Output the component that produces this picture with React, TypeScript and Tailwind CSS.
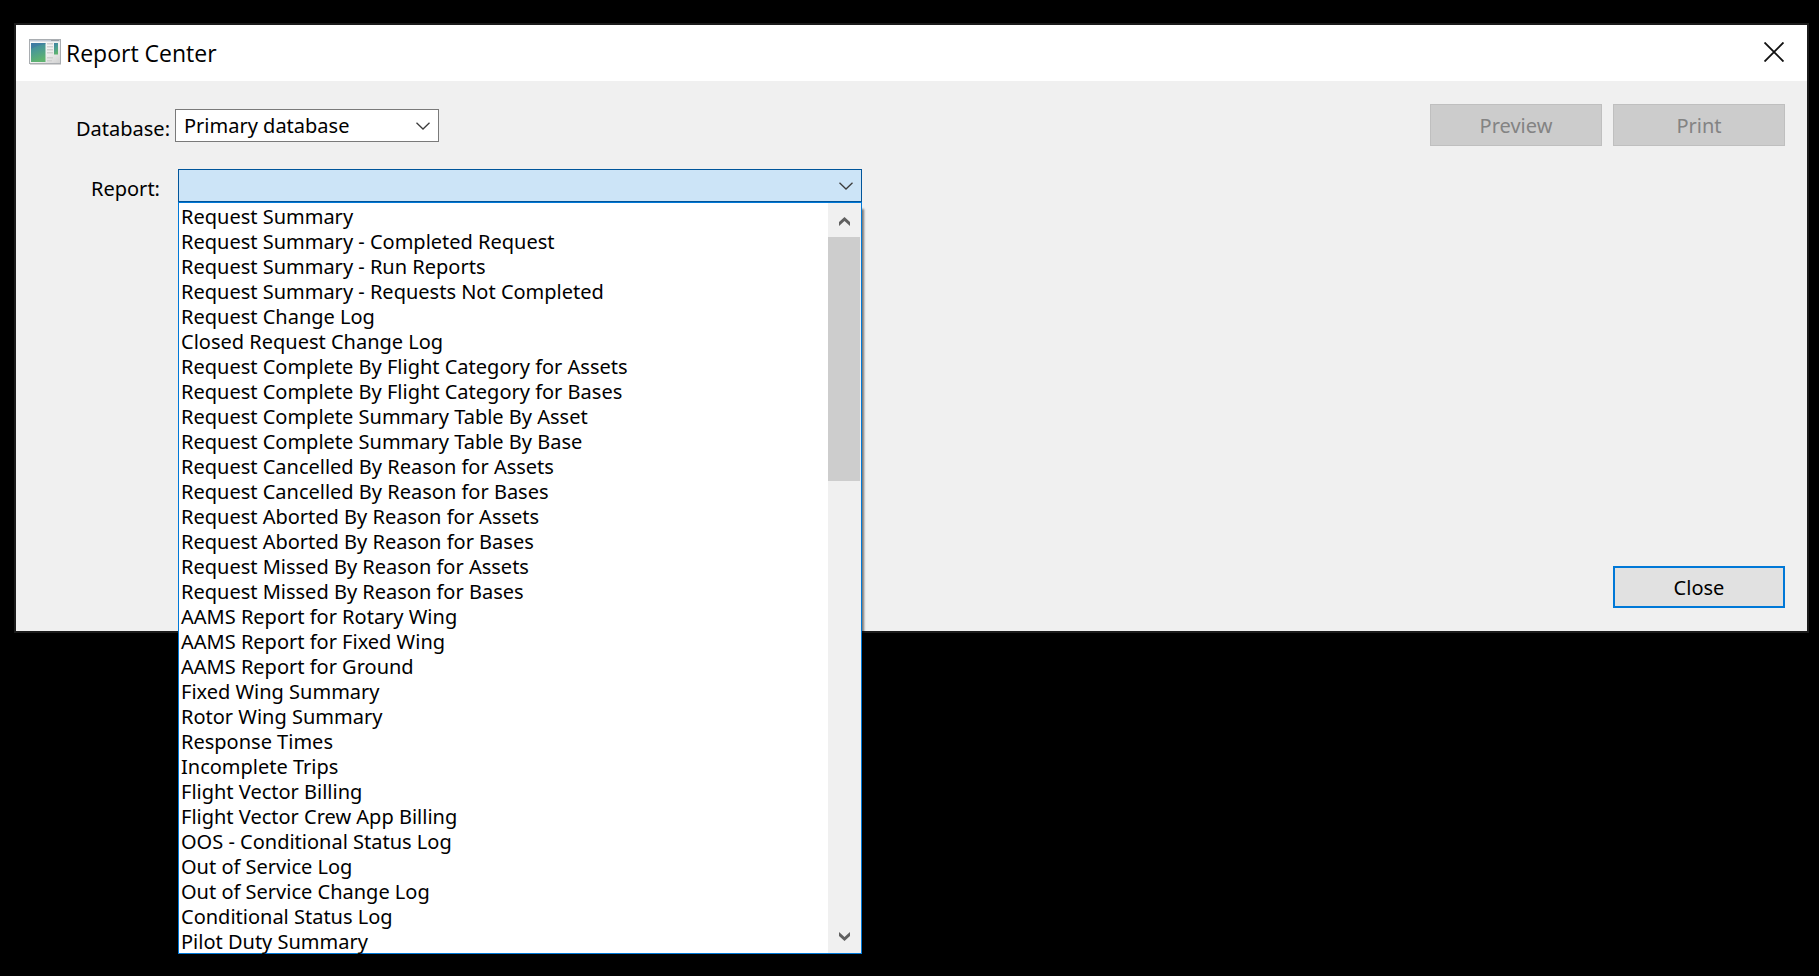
import { useState } from "react";

const reports = [
  "Request Summary",
  "Request Summary - Completed Request",
  "Request Summary - Run Reports",
  "Request Summary - Requests Not Completed",
  "Request Change Log",
  "Closed Request Change Log",
  "Request Complete By Flight Category for Assets",
  "Request Complete By Flight Category for Bases",
  "Request Complete Summary Table By Asset",
  "Request Complete Summary Table By Base",
  "Request Cancelled By Reason for Assets",
  "Request Cancelled By Reason for Bases",
  "Request Aborted By Reason for Assets",
  "Request Aborted By Reason for Bases",
  "Request Missed By Reason for Assets",
  "Request Missed By Reason for Bases",
  "AAMS Report for Rotary Wing",
  "AAMS Report for Fixed Wing",
  "AAMS Report for Ground",
  "Fixed Wing Summary",
  "Rotor Wing Summary",
  "Response Times",
  "Incomplete Trips",
  "Flight Vector Billing",
  "Flight Vector Crew App Billing",
  "OOS - Conditional Status Log",
  "Out of Service Log",
  "Out of Service Change Log",
  "Conditional Status Log",
  "Pilot Duty Summary",
];

function WindowIcon() {
  return (
    <svg width="32" height="26" viewBox="0 0 32 26" aria-hidden="true" className="shrink-0">
      <defs>
        <linearGradient id="pane" x1="0" y1="0" x2="0.3" y2="1">
          <stop offset="0" stopColor="#3f7fa3" />
          <stop offset="0.45" stopColor="#4a9a94" />
          <stop offset="1" stopColor="#5fb370" />
        </linearGradient>
        <linearGradient id="frame" x1="0" y1="0" x2="1" y2="1">
          <stop offset="0" stopColor="#ffffff" />
          <stop offset="0.6" stopColor="#efefef" />
          <stop offset="1" stopColor="#cfcfcf" />
        </linearGradient>
      </defs>
      <rect x="0.5" y="0.5" width="31" height="24" fill="url(#frame)" stroke="#a9adb1" />
      <rect x="1" y="1" width="30" height="1.5" fill="#c3cad6" />
      <rect x="22" y="1" width="8" height="1" fill="#9aa0a8" />
      <rect x="2" y="4" width="14.5" height="19" fill="url(#pane)" />
      <path d="M2 10 Q8 6 16.5 5 V4 H2 Z" fill="#3b72a6" opacity="0.5" />
      <g fill="#d0d0d0">
        <rect x="18" y="4" width="6" height="1.5" />
        <rect x="18" y="7" width="6" height="1.5" />
        <rect x="18" y="10" width="6" height="1.5" />
        <rect x="18" y="13" width="6" height="1.5" />
        <rect x="18" y="18" width="6" height="1.5" />
        <rect x="18" y="21" width="5" height="1.5" />
      </g>
      <rect x="25" y="4" width="4" height="11.5" fill="url(#pane)" />
      <path d="M1 25.5 H32" stroke="#d5d5d5" />
    </svg>
  );
}

function Chevron() {
  return (
    <svg
      width="14"
      height="8"
      viewBox="0 0 14 8"
      aria-hidden="true"
      className="pointer-events-none absolute top-[13px] right-[9px]"
    >
      <path d="M0.5 0.7 L7 7 L13.5 0.7" fill="none" stroke="#3c3c3c" strokeWidth="1.3" />
    </svg>
  );
}

function ScrollArrow({ down = false }: { down?: boolean }) {
  return (
    <svg width="11" height="9" viewBox="0 0 11 9" aria-hidden="true">
      <path
        d={down ? "M0 0 L5.5 5 L11 0 V4 L5.5 9 L0 4 Z" : "M0 9 L5.5 4 L11 9 V5 L5.5 0 L0 5 Z"}
        fill="#606060"
      />
    </svg>
  );
}

const buttonSize = "flex h-[42px] w-[172px] items-center justify-center";

export default function App() {
  const [open, setOpen] = useState(true);
  const [report, setReport] = useState("");

  return (
    <div className="min-h-screen bg-black pt-[23px] pr-[10px] pl-[14px] font-['Noto_Sans',sans-serif] text-[20px] leading-[27px] text-black">
      <div role="dialog" aria-labelledby="title" className="border-2 border-[#1b1b1b] bg-[#f0f0f0]">
        <header className="flex h-14 gap-[5px] bg-white pt-3 pr-5 pl-[13px]">
          <span className="pt-0.5">
            <WindowIcon />
          </span>
          <h1 id="title" className="flex-1 font-['Open_Sans',sans-serif] text-[23px] leading-8">
            Report Center
          </h1>
          <button type="button" aria-label="Close window" className="flex h-[30px] w-[26px] items-center justify-center">
            <svg width="20" height="20" viewBox="0 0 20 20" aria-hidden="true">
              <path d="M0.5 0.5 L19.5 19.5 M19.5 0.5 L0.5 19.5" stroke="#111" strokeWidth="1.9" />
            </svg>
          </button>
        </header>

        <div className="flex min-h-[550px] flex-col justify-between pt-[23px] pr-[22px] pb-[23px] pl-[60px]">
          <div className="flex items-start justify-between">
            <div className="flex flex-col gap-[27px] pt-[5px]">
              <div className="flex h-[33px]">
                <label htmlFor="database" className="w-[99px] pt-1.5">
                  Database:
                </label>
                <div className="relative w-[264px]">
                  <select
                    id="database"
                    className="block h-[33px] w-full appearance-none border border-[#7a7a7a] bg-white pr-8 pl-2"
                  >
                    <option>Primary database</option>
                  </select>
                  <Chevron />
                </div>
              </div>

              <div className="flex h-[33px]">
                <label htmlFor="report" className="w-[102px] pt-1.5 pl-[15px]">
                  Report:
                </label>
                <div className="relative w-[684px]">
                  <select
                    id="report"
                    value={report}
                    onChange={(e) => setReport(e.target.value)}
                    onMouseDown={(e) => {
                      e.preventDefault();
                      setOpen(!open);
                    }}
                    className="block h-[33px] w-full appearance-none border border-[#00559b] bg-[#cce4f7] pr-8 pl-2"
                  >
                    <option value=""></option>
                    {reports.map((name) => (
                      <option key={name}>{name}</option>
                    ))}
                  </select>
                  <Chevron />

                  {open && (
                    <div className="absolute top-full left-0 flex w-full border border-[#0078d7] bg-white shadow-[3px_6px_2px_-1px_rgba(0,0,0,0.5)]">
                      <ul role="listbox" aria-label="Report" className="flex-1">
                        {reports.map((name) => (
                          <li
                            key={name}
                            role="option"
                            aria-selected={name === report}
                            className="h-[25px] pl-0.5 whitespace-nowrap"
                            onClick={() => {
                              setReport(name);
                              setOpen(false);
                            }}
                          >
                            {name}
                          </li>
                        ))}
                      </ul>
                      <div className="flex w-[33px] flex-col bg-[#f0f0f0]">
                        <button
                          type="button"
                          aria-label="Scroll up"
                          className="flex h-[34px] items-center justify-center pt-0.5"
                        >
                          <ScrollArrow />
                        </button>
                        <div className="flex-1 pr-px">
                          <div className="h-[244px] bg-[#cdcdcd]" />
                        </div>
                        <button
                          type="button"
                          aria-label="Scroll down"
                          className="flex h-[34px] items-center justify-center"
                        >
                          <ScrollArrow down />
                        </button>
                      </div>
                    </div>
                  )}
                </div>
              </div>
            </div>

            <div className="flex gap-[11px]">
              <button type="button" disabled className={`${buttonSize} border border-[#bfbfbf] bg-[#cccccc] text-[#838383]`}>
                Preview
              </button>
              <button type="button" disabled className={`${buttonSize} border border-[#bfbfbf] bg-[#cccccc] text-[#838383]`}>
                Print
              </button>
            </div>
          </div>

          <div className="flex justify-end">
            <button type="button" className={`${buttonSize} border-2 border-[#0078d7] bg-[#e1e1e1]`}>
              Close
            </button>
          </div>
        </div>
      </div>
    </div>
  );
}
